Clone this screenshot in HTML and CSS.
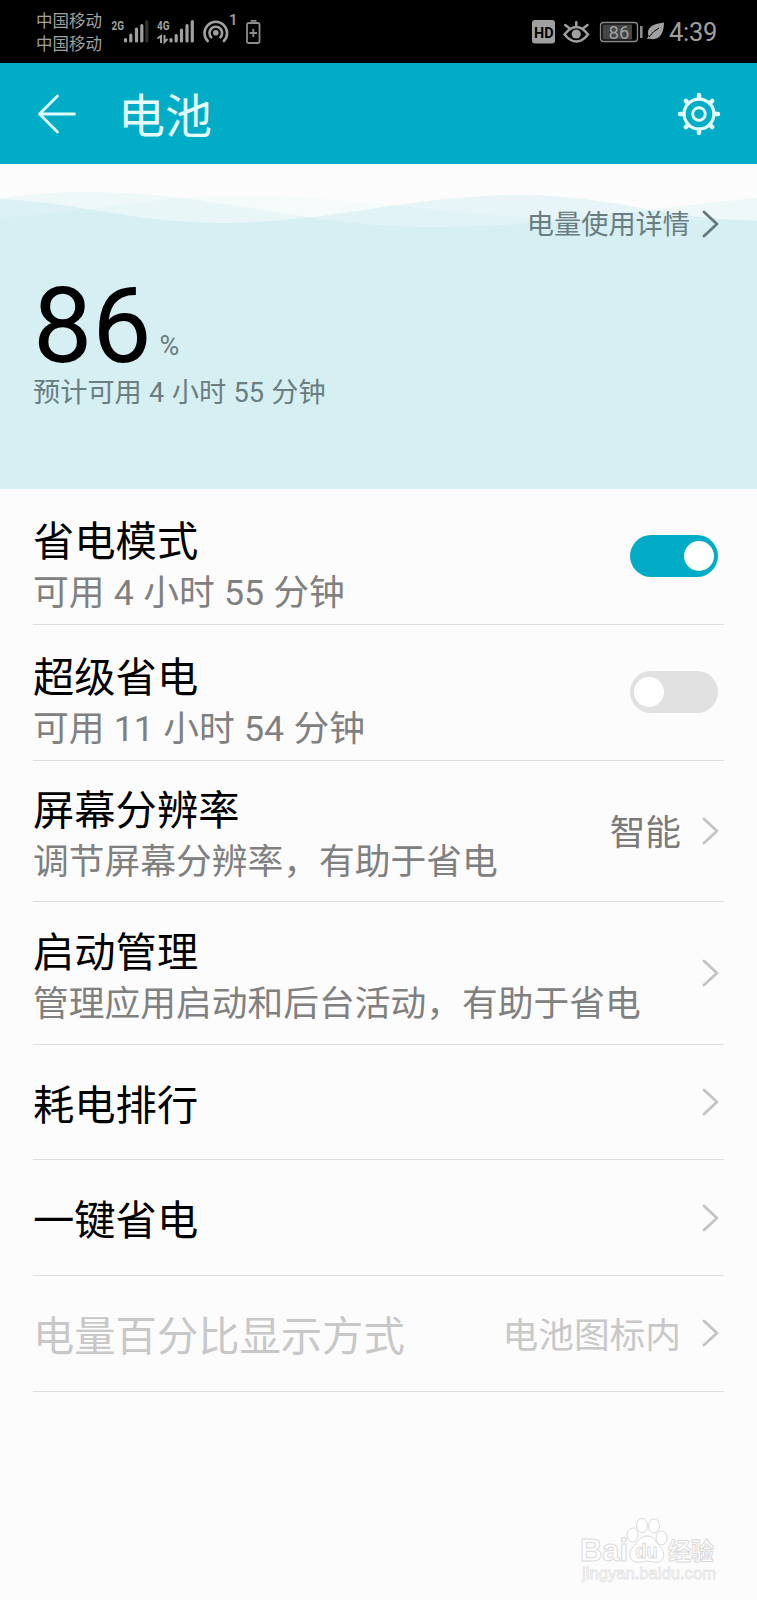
FILE: index.html
```html
<!DOCTYPE html>
<html lang="zh-CN">
<head>
<meta charset="utf-8">
<title>电池</title>
<link rel="stylesheet" href="styles.css">
</head>
<body>
<div class="screen">
  <div class="status">
    <div class="carriers"><span>中国移动</span><span>中国移动</span></div>
    <svg class="status-left" width="152" height="36" viewBox="110 10 152 36">
      <g class="tiny"><text x="111.500" y="30" textLength="12.500" lengthAdjust="spacingAndGlyphs">2G</text><text x="157" y="30" textLength="12.500" lengthAdjust="spacingAndGlyphs">4G</text></g>
      <g class="bars"><path d="M125.500 39.500v1.500M130.800 35v6M136.500 29v12M141.800 25.500v15.500"/><path class="dim" d="M146.800 21.500v19.500"/><path d="M171 39.500v1.500M176.200 35.500v5.500M181.500 30v11M187 25.500v15.500M192.300 21.500v19.500"/></g>
      <path d="M157.500 38.500l3.500-2.500v7M164.500 35v7l3-3" fill="none" stroke="#a0a0a0" stroke-width="2"/>
      <g fill="none" stroke="#a0a0a0" stroke-width="2.600" stroke-linecap="round"><path d="M207.700 41a11.300 11.300 0 1 1 16.200 0"/><path d="M211.200 37.300a6.300 6.300 0 1 1 9.200 0"/></g>
      <circle cx="215.800" cy="32.800" r="2.800" fill="#a0a0a0"/>
      <text class="one" x="229" y="24.500">1</text>
      <g fill="none" stroke="#8c8c8c" stroke-width="1.800"><rect x="247" y="23" width="12.500" height="20" rx="1.800"/><path d="M250.500 20.800h6M253.300 29v8M249.500 33h7.500"/></g>
    </svg>
    <svg class="status-right" width="134" height="36" viewBox="532 14 134 36">
      <rect x="532" y="20" width="23" height="23.500" rx="3" fill="#a0a0a0"/>
      <text class="hd" x="534" y="37.500" textLength="19.500" lengthAdjust="spacingAndGlyphs">HD</text>
      <g fill="none" stroke="#a0a0a0" stroke-width="2.500" stroke-linecap="round"><path d="M564.500 34.500q12-15 23.500 0q-11.500 14-23.500 0zM576.300 26v-3.700M569 28l-3.800-3M583.500 28l4-3"/></g>
      <circle cx="576.200" cy="34" r="4.600" fill="#a0a0a0"/>
      <rect x="600.500" y="22.500" width="37" height="19" rx="3" fill="none" stroke="#8c8c8c" stroke-width="1.300"/>
      <rect x="602.500" y="24.500" width="29.500" height="15" fill="#454545"/>
      <text class="level" x="608.500" y="39">86</text>
      <path d="M641.300 26v12" stroke="#8c8c8c" stroke-width="2.600"/>
      <path d="M664 22.500C652 24 646 28 648.500 36L647 39l2.500-.3C659 41 664 34 664 22.500z" fill="#a0a0a0"/><path d="M649 37q4-6 10-9" stroke="#000" fill="none" stroke-width="1"/>
    </svg>
    <span class="time">4:39</span>
  </div>

  <div class="header">
    <svg width="40" height="40" viewBox="0 0 40 40"><path d="M20.500 2 2.500 20 20.500 38M2.500 20H37.500" fill="none" stroke="#dffcff" stroke-width="2.800" stroke-linecap="round" stroke-linejoin="round"/></svg>
    <h1>电池</h1>
    <svg class="gear" width="44" height="44" viewBox="-22 -22 44 44">
      <g fill="none" stroke="#e4fdff"><circle r="14.900" stroke-width="3.200"/><circle r="6.300" stroke-width="2.900"/>
      <path stroke-width="4.500" stroke-linecap="round" d="M0-16.500V-19M0 16.500V19M-16.500 0H-19M16.500 0H19M11-11l2.200-2.200M-11-11l-2.200-2.200M11 11l2.200 2.200M-11 11l-2.200 2.200"/></g>
    </svg>
  </div>

  <div class="hero">
    <svg class="waves" width="757" height="325" viewBox="0 0 757 325">
      <path class="wave-c" d="M0 53C90 50 140 32 240 32C370 32 460 55 590 56C660 57 710 56 757 55V325H0Z"/>
      <path class="wave-b" d="M0 34C30 31 50 28 85 28C220 28 300 63 430 63C560 63 640 44 757 34V325H0Z"/>
      <path class="wave-a" d="M0 35C80 38 130 59 225 59C330 59 410 31 520 31C610 31 660 54 757 57V325H0Z"/>
    </svg>
    <a class="detail"><span>电量使用详情</span><svg class="chev" width="17" height="28" viewBox="0 0 17 28"><path d="M2 2 15 14 2 26"/></svg></a>
    <div class="percent"><b>86</b><i>%</i></div>
    <p class="estimate">预计可用 4 小时 55 分钟</p>
  </div>

  <div class="list">
    <div class="row r1"><div class="label"><h2>省电模式</h2><p>可用 4 小时 55 分钟</p></div><span class="toggle on"></span></div>
    <div class="row r2"><div class="label"><h2>超级省电</h2><p>可用 11 小时 54 分钟</p></div><span class="toggle"></span></div>
    <div class="row r3"><div class="label"><h2>屏幕分辨率</h2><p>调节屏幕分辨率，有助于省电</p></div><span class="value">智能</span><svg class="chev" width="17" height="28" viewBox="0 0 17 28"><path d="M2 2 15 14 2 26"/></svg></div>
    <div class="row r4"><div class="label"><h2>启动管理</h2><p>管理应用启动和后台活动，有助于省电</p></div><svg class="chev" width="17" height="28" viewBox="0 0 17 28"><path d="M2 2 15 14 2 26"/></svg></div>
    <div class="row single"><div class="label"><h2>耗电排行</h2></div><svg class="chev" width="17" height="28" viewBox="0 0 17 28"><path d="M2 2 15 14 2 26"/></svg></div>
    <div class="row single"><div class="label"><h2>一键省电</h2></div><svg class="chev" width="17" height="28" viewBox="0 0 17 28"><path d="M2 2 15 14 2 26"/></svg></div>
    <div class="row single disabled"><div class="label"><h2>电量百分比显示方式</h2></div><span class="value">电池图标内</span><svg class="chev" width="17" height="28" viewBox="0 0 17 28"><path d="M2 2 15 14 2 26"/></svg></div>
  </div>

  <svg class="watermark" width="150" height="75" viewBox="575 1512 150 75">
    <g class="outline">
      <text x="580" y="1560.500" font-size="31" font-weight="700" textLength="48" lengthAdjust="spacingAndGlyphs">Bai</text>
      <ellipse cx="632.500" cy="1535" rx="5.500" ry="7"/><ellipse cx="642" cy="1525.500" rx="5.500" ry="7"/><ellipse cx="654" cy="1526" rx="5.500" ry="7"/><ellipse cx="661.500" cy="1538" rx="5.500" ry="7"/>
      <path d="M647 1536c7 0 9 6 13 11c8 8 2 17-6 15q-7-2-14 0c-8 2-14-7-7-15c5-5 7-11 14-11z"/>
      <text x="635.500" y="1557.500" font-size="20" font-weight="700" textLength="22" lengthAdjust="spacingAndGlyphs">du</text>
      <text x="668" y="1559.500" font-size="24" font-weight="700" textLength="46" lengthAdjust="spacingAndGlyphs">经验</text>
      <text class="url" x="582" y="1578.500" font-size="16" textLength="134" lengthAdjust="spacingAndGlyphs">jingyan.baidu.com</text>
    </g>
  </svg>
</div>
</body>
</html>
```
FILE: styles.css
```css
* { box-sizing: border-box; margin: 0; padding: 0; }
body { background: #fcfcfc; font-family: Roboto, "Noto Sans CJK SC", sans-serif; }
svg { display: block; flex: none; }
.screen { position: relative; width: 757px; height: 1600px; overflow: hidden; background: #fcfcfc; }

.status { display: flex; align-items: flex-start; height: 63px; background: #000; color: #a0a0a0; padding-left: 36px; }
.carriers { display: flex; flex-direction: column; width: 74px; padding-top: 10px; font-size: 16.5px; line-height: 23px; white-space: nowrap; }
.status-left { margin-top: 10px; }
.status-right { margin: 14px 0 0 270px; }
.status text { fill: #a0a0a0; }
.tiny text { font-size: 13px; font-weight: 700; }
.bars path { fill: none; stroke: #a0a0a0; stroke-width: 3.2; stroke-linecap: round; }
.bars .dim { stroke: #303030; }
.status .one { font-size: 15px; font-weight: 500; }
.status .hd { font-size: 14px; font-weight: 700; fill: #000; }
.status .level { font-size: 18.5px; }
.time { margin: 16px 0 0 3px; font-size: 25.5px; line-height: 32px; letter-spacing: -.3px; }

.header { display: flex; align-items: center; height: 101px; padding: 0 36px 0 37px; background: #00acc6; color: #e4fdff; }
.header h1 { flex: 1; margin: 6px 0 0 41px; font-size: 47px; font-weight: 400; line-height: 60px; }

.hero { position: relative; height: 325px; padding: 40px 38px 0 33px; color: #6a7d80; }
.waves { position: absolute; left: 0; top: 0; }
.wave-a { fill: #00acc6; fill-opacity: .08; }
.wave-b { fill: #00acc6; fill-opacity: .05; }
.wave-c { fill: #00acc6; fill-opacity: .028; }
.detail, .percent, .estimate { position: relative; }
.detail { display: flex; justify-content: flex-end; align-items: center; gap: 12px; height: 40px; font-size: 27.2px; line-height: 40px; }
.detail span { padding-top: 2px; }
.chev path { fill: none; stroke: #c4c4c4; stroke-width: 2.8; stroke-linecap: round; stroke-linejoin: round; }
.detail .chev path { stroke: #65777a; }
.percent { display: flex; height: 91px; line-height: 90px; margin-top: 37px; }
.percent b { font-size: 105.5px; font-weight: 400; color: #000; }
.percent i { font-size: 27px; font-style: normal; margin: 20px 0 0 8px; }
.estimate { margin-top: 1px; font-size: 27.2px; line-height: 40px; word-spacing: .6px; }

.list { padding: 0 33px; }
.row { display: flex; align-items: center; border-bottom: 1.5px solid #dedede; }
.label { flex: 1; align-self: flex-start; white-space: nowrap; }
.row h2 { font-size: 41.3px; font-weight: 400; line-height: 54px; color: #000; }
.row p { font-size: 35.75px; line-height: 48px; color: #808080; word-spacing: .4px; }
.row .chev { margin-right: 5px; }
.value { margin-right: 21px; padding-top: 4px; font-size: 35.7px; line-height: 48px; color: #7a7a7a; }
.r1, .r2 { height: 136px; }
.r1 .label, .r2 .label { padding-top: 26px; }
.r3 { height: 141px; }
.r3 .label { padding-top: 22.5px; }
.r4 { height: 142.5px; }
.r4 .label { padding-top: 24px; }
.single { height: 115.8px; }
.single .label { padding-top: 34px; }
.disabled h2, .disabled .value { color: #c8c8c8; }
.disabled .value { padding-top: 6px; }
.toggle { width: 88px; height: 42px; margin: 0 6.5px 2px 0; border-radius: 21px; background: #e1e1e1; padding: 6px 4px; display: flex; }
.toggle::before { content: ""; width: 30px; height: 30px; border-radius: 50%; background: #fff; }
.toggle.on { background: #00acc6; justify-content: flex-end; }

.watermark { position: absolute; left: 575px; top: 1512px; }
.outline { fill: #fff; stroke: #dadada; stroke-width: 1; }
.outline text { font-family: "Liberation Sans", "Noto Sans CJK SC", sans-serif; }
.outline .url { stroke: #e4e4e4; stroke-width: .8; }
```
